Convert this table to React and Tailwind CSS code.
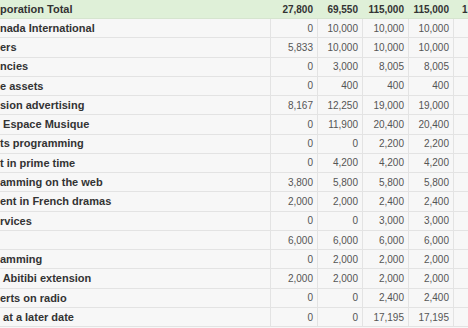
import React from 'react';

const rows = [
  ['nada International', 0, '10,000', '10,000', '10,000'],
  ['ers', '5,833', '10,000', '10,000', '10,000'],
  ['ncies', 0, '3,000', '8,005', '8,005'],
  ['e assets', 0, '400', '400', '400'],
  ['sion advertising', '8,167', '12,250', '19,000', '19,000'],
  [' Espace Musique', 0, '11,900', '20,400', '20,400'],
  ['ts programming', 0, 0, '2,200', '2,200'],
  ['t in prime time', 0, '4,200', '4,200', '4,200'],
  ['amming on the web', '3,800', '5,800', '5,800', '5,800'],
  ['ent in French dramas', '2,000', '2,000', '2,400', '2,400'],
  ['rvices', 0, 0, '3,000', '3,000'],
  ['', '6,000', '6,000', '6,000', '6,000'],
  ['amming', 0, '2,000', '2,000', '2,000'],
  [' Abitibi extension', '2,000', '2,000', '2,000', '2,000'],
  ['erts on radio', 0, 0, '2,400', '2,400'],
  [' at a later date', 0, 0, '17,195', '17,195'],
];

const cols = 'grid grid-cols-[270px_47px_45px_46px_45px_50px]';

const App = () => {
  return (
    <div className="w-[468px] h-[328px] overflow-hidden bg-[#f7f7f7] font-['Liberation_Sans',Arial,sans-serif] text-[10px]">
      <div className={`${cols} h-[19px] bg-[#dff0d8] border-b border-[#d6e4cf] font-bold text-[#333] items-center`}>
        <div className="whitespace-pre text-[11px]">poration Total</div>
        <div className="text-right pr-[4px]">27,800</div>
        <div className="text-right pr-[4px]">69,550</div>
        <div className="text-right pr-[4px]">115,000</div>
        <div className="text-right pr-[4px]">115,000</div>
        <div className="pl-[9px]">1</div>
      </div>
      {rows.map((r, i) => (
        <div key={i} className={`${cols} h-[19.27px] border-b border-[#e3e3e3]`}>
          <div className="flex items-center font-bold text-[11px] text-[#333] whitespace-pre">{r[0]}</div>
          {r.slice(1).map((v, j) => (
            <div key={j} className="flex items-center justify-end pr-[4px] border-l border-[#e3e3e3] text-[#555]">
              {v}
            </div>
          ))}
          <div className="border-l border-[#e3e3e3]"></div>
        </div>
      ))}
    </div>
  );
};

export default App;
